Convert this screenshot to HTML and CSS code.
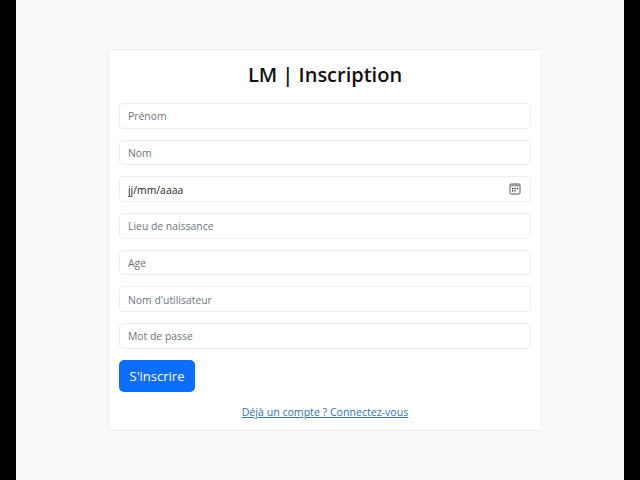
FILE: index.html
```html
<!DOCTYPE html>
<html lang="fr">
<head>
    <meta charset="UTF-8">
    <meta name="viewport" content="width=device-width, initial-scale=1.0">
    <title>LM | Inscription</title>
    <link rel="stylesheet" href="styles.css">
</head>
<body>
    <div class="page">
        <div class="card">
            <h2 class="card-title">LM | Inscription</h2>
            <form class="signup-form">
                <input class="form-control" type="text" placeholder="Prénom">
                <input class="form-control" type="text" placeholder="Nom">
                <div class="date-field">
                    <input class="form-control date-input" type="text" value="jj/mm/aaaa">
                    <svg class="date-icon" viewBox="0 0 12 12" width="12" height="12">
                        <rect x="1" y="1" width="10" height="10" rx="1.2" fill="#fff" stroke="#555" stroke-width="1"/>
                        <rect x="1" y="1" width="10" height="2.4" fill="#999"/>
                        <path d="M3 5.6h1.3M5.4 5.6h1.3M7.8 5.6h1.3M3 7.9h1.3M5.4 7.9h1.3" stroke="#222" stroke-width="1.1"/>
                    </svg>
                </div>
                <input class="form-control" type="text" placeholder="Lieu de naissance">
                <input class="form-control" type="text" placeholder="Age">
                <input class="form-control" type="text" placeholder="Nom d'utilisateur">
                <input class="form-control" type="password" placeholder="Mot de passe">
                <button class="btn-primary" type="button">S'inscrire</button>
            </form>
            <p class="login-link"><a href="#">Déjà un compte ? Connectez-vous</a></p>
        </div>
    </div>
</body>
</html>
```

FILE: styles.css
```css
* {
    box-sizing: border-box;
}

html, body {
    height: 100%;
}

body {
    margin: 0;
    background-color: #000;
    font-family: "Open Sans", "Noto Sans", sans-serif;
    overflow: hidden;
}

.page {
    width: 608px;
    height: 480px;
    margin: 0 auto;
    padding: 49px 82px 0 92px;
    background-color: #f8f9fa;
}

.card {
    height: 382px;
    padding: 10px 10px 0 10px;
    background-color: #fff;
    border: 1px solid #eef0f2;
    border-radius: 4px;
}

.card-title {
    margin: 0 0 14px;
    height: 29px;
    font-size: 20px;
    line-height: 29px;
    font-weight: 600;
    text-align: center;
    color: #111;
}

.signup-form {
    display: flex;
    flex-direction: column;
    align-items: flex-start;
    gap: 11.1px;
}

.form-control {
    display: block;
    width: 412px;
    height: 25.6px;
    padding: 1px 8px 0;
    font-family: inherit;
    font-size: 10.4px;
    color: #212529;
    background-color: #fff;
    border: 1px solid #eceef0;
    border-radius: 4px;
}

.form-control::placeholder {
    color: #6c757d;
    opacity: 1;
}

.date-field {
    position: relative;
    width: 412px;
}

.date-icon {
    position: absolute;
    top: 7px;
    right: 10px;
}

.btn-primary {
    width: 76px;
    height: 32.5px;
    padding: 0;
    font-family: inherit;
    font-size: 13px;
    color: #fff;
    background-color: #0d6efd;
    border: none;
    border-radius: 5px;
}

.login-link {
    margin: 13px 0 0;
    font-size: 10.6px;
    line-height: 15px;
    text-align: center;
}

.login-link a {
    color: #2f77b5;
}
```
